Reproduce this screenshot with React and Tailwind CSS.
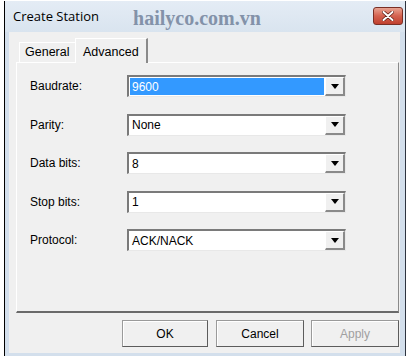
import React from "react";

function Combo({ value, selected }) {
  return (
    <div className="w-[219px] h-[22px] flex border-t-2 border-l-2 border-t-[#7a7a7a] border-l-[#7a7a7a] border-b border-r border-b-[#e8e8e8] border-r-[#e8e8e8] bg-white">
      <div className="flex-1 flex items-center pl-[1px] pr-[1px]">
        <div
          className={
            selected
              ? "h-[17px] w-full bg-[#3399ff] text-white flex items-center pl-[2px]"
              : "h-[17px] w-full flex items-center pl-[2px]"
          }
        >
          {value}
        </div>
      </div>
      <div className="w-[20px] h-full bg-[#f0f0f0] border-t border-l border-t-white border-l-white border-b-2 border-r-2 border-b-[#8a8a8a] border-r-[#8a8a8a] flex items-center justify-center">
        <svg width="8" height="5" viewBox="0 0 8 5">
          <path d="M0 0 H8 L4 5 Z" fill="#000" />
        </svg>
      </div>
    </div>
  );
}

function Row({ label, value, selected }) {
  return (
    <div className="h-[22px] flex items-center">
      <div className="w-[97px]">{label}</div>
      <Combo value={value} selected={selected} />
    </div>
  );
}

function Btn({ children, disabled, w, ml }) {
  return (
    <div
      className={
        "h-[27px] flex items-center justify-center bg-[#f0f0f0] border border-[#9a9a9a] border-r-[#5c5c5c] border-b-[#5c5c5c] shadow-[inset_1px_1px_0_#ffffff] " +
        (disabled ? "text-[#a0a0a0]" : "text-black")
      }
      style={{ width: w, marginLeft: ml }}
    >
      {children}
    </div>
  );
}

export default function App() {
  return (
    <div className="w-[411px] h-[359px] bg-white overflow-hidden font-['Liberation_Sans',Arial,sans-serif] text-[12px] text-black">
      <div className="ml-[4px] mt-[1px] w-[402px] h-[355px] border-l border-r border-l-black border-r-[#2e3440] bg-[#d3dfec] flex flex-col">
        {/* Title bar */}
        <div className="h-[31px] flex items-center relative bg-gradient-to-b from-[#e4ecf5] to-[#d9e4ef]">
          <span className="ml-[8px] text-[13px] text-black font-['Open_Sans','Liberation_Sans',sans-serif] leading-none">
            Create Station
          </span>
          <span className="ml-[34px] mt-[2px] text-[20px] font-bold text-[#8392a9] font-['Liberation_Serif',serif] leading-none">
            hailyco.com.vn
          </span>
          <div className="absolute left-[368px] top-[6px] w-[30px] h-[18px] rounded-[3px] border border-[#7a2f25] bg-gradient-to-b from-[#e7a392] via-[#d4614f] to-[#c0402e] flex items-center justify-center">
            <svg width="12" height="10" viewBox="0 0 12 10">
              <path d="M1.5 1 L10.5 9 M10.5 1 L1.5 9" stroke="#5a1a12" strokeWidth="3.4" strokeLinecap="round" />
              <path d="M1.5 1 L10.5 9 M10.5 1 L1.5 9" stroke="#ffffff" strokeWidth="2" strokeLinecap="round" />
            </svg>
          </div>
        </div>
        {/* Client area */}
        <div className="ml-[4px] w-[391px] h-[321px] bg-[#f0f0f0] flex flex-col">
          {/* Tabs */}
          <div className="h-[30px] flex items-end pl-[10px]">
            <div className="w-[57px] h-[20px] border-t border-l border-t-white border-l-white border-r border-r-[#a0a0a0] flex items-center pl-[5px] text-[12.5px]">
              General
            </div>
            <div className="w-[73px] h-[25px] -mb-[1px] ml-[-1px] bg-[#f0f0f0] border-t border-l border-t-white border-l-white border-r-2 border-r-[#8a8a8a] relative z-10 flex items-start pt-[4px] pl-[7px] text-[12.5px]">
              Advanced
            </div>
          </div>
          {/* Panel */}
          <div className="ml-[7px] w-[383px] h-[251px] border-t border-l border-t-white border-l-white border-r border-b-2 border-r-[#8a8a8a] border-b-[#6a6a6a] pt-[12px] pl-[13px] flex flex-col gap-[16.5px]">
            <Row label="Baudrate:" value="9600" selected />
            <Row label="Parity:" value="None" />
            <Row label="Data bits:" value="8" />
            <Row label="Stop bits:" value="1" />
            <Row label="Protocol:" value="ACK/NACK" />
          </div>
          {/* Buttons */}
          <div className="mt-[7px] flex">
            <Btn w={86} ml={113}>OK</Btn>
            <Btn w={88} ml={8}>Cancel</Btn>
            <Btn w={88} ml={7} disabled>Apply</Btn>
          </div>
        </div>
      </div>
    </div>
  );
}
